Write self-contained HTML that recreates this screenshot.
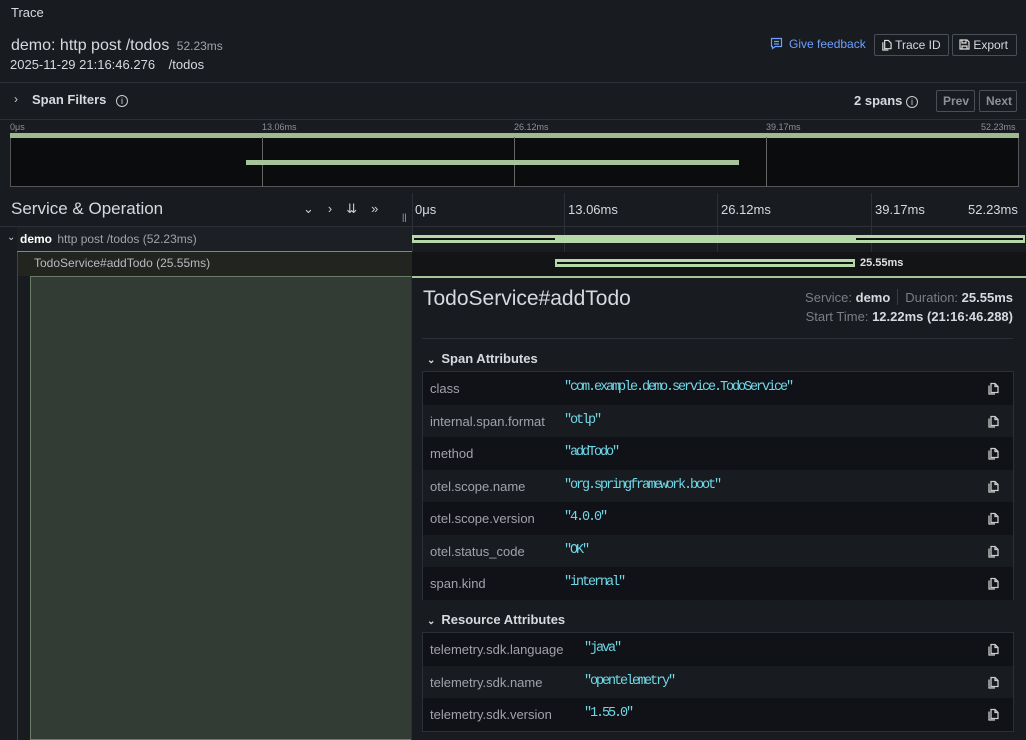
<!DOCTYPE html><html><head><meta charset="utf-8"><style>
*{box-sizing:border-box;margin:0;padding:0}
body{width:1026px;height:740px;overflow:hidden;background:#181b1f;font-family:"Liberation Sans",sans-serif;color:#ccccdc;position:relative;font-size:13px}
.a{position:absolute;white-space:nowrap}
.hl{position:absolute;height:1px;background:#2c3036}
.vl{position:absolute;width:1px}
.btn{position:absolute;border:1px solid #4a4e55;border-radius:2px;height:22px;font-size:12px;color:#d8d9e0;padding:0 6px;line-height:20px}
.row{position:absolute;left:423px;width:590px;height:32.5px}
.k{position:absolute;left:7px;top:9px;color:#a0a3ab;font-size:13px}
.v{position:absolute;top:8px;color:#6fd6e6;font-family:"Liberation Mono",monospace;font-size:13.5px;letter-spacing:-2.1px}
.cp{position:absolute;right:14px;top:10px}
</style></head><body>
<div class="a" style="left:11px;top:5px;font-size:13px;color:#d8d9e0">Trace</div>
<div class="a" style="left:11px;top:37px;font-size:16px;color:#d8d9e0">demo: http post /todos <span style="font-size:12px;color:#a0a3ab;margin-left:3px">52.23ms</span></div>
<div class="a" style="left:10px;top:57px;font-size:13px;color:#d8d9e0">2025-11-29 21:16:46.276 <span style="margin-left:10px">/todos</span></div>
<div class="a" style="left:770px;top:37px;font-size:12px;color:#6e9fff"><svg width="13" height="13" viewBox="0 0 13 13" style="vertical-align:-2px;margin-right:6px"><path d="M1.5 1.5h10v8h-6l-3 2v-2h-1z M4 4.5h5 M4 7h5" fill="none" stroke="#6e9fff" stroke-width="1.2"/></svg>Give feedback</div>
<div class="btn" style="left:874px;top:34px;width:75px"><svg width="11" height="12" viewBox="0 0 12 13" style="vertical-align:-2px"><path d="M4 1.5h4l3 3v6h-7z M2 3.5v8.5h6" fill="none" stroke="#ddd" stroke-width="1.3"/></svg> Trace ID</div>
<div class="btn" style="left:952px;top:34px;width:65px"><svg width="11" height="11" viewBox="0 0 11 11" style="vertical-align:-1px"><path d="M1 1h7l2 2v7h-9z M3 1v3h4v-3 M3 10v-3h5v3" fill="none" stroke="#ddd" stroke-width="1.2"/></svg> Export</div>
<div class="hl" style="left:0;top:82px;width:1026px"></div>
<div class="a" style="left:14px;top:92px;font-size:12px">›</div>
<div class="a" style="left:32px;top:92px;font-size:13px;font-weight:bold;color:#d8d9e0">Span Filters <span style="display:inline-block;width:12px;height:12px;border:1px solid #ccc;border-radius:50%;font-size:9px;text-align:center;line-height:10px;margin-left:6px;font-weight:normal">i</span></div>
<div class="a" style="left:854px;top:93px;font-size:13px;font-weight:bold;color:#d8d9e0">2 spans <span style="display:inline-block;width:12px;height:12px;border:1px solid #ccc;border-radius:50%;font-size:9px;text-align:center;line-height:10px;font-weight:normal">i</span></div>
<div class="btn" style="left:936px;top:90px;width:39px;color:#8e9099;font-weight:bold">Prev</div>
<div class="btn" style="left:979px;top:90px;width:38px;color:#8e9099;font-weight:bold">Next</div>
<div class="hl" style="left:0;top:119px;width:1026px"></div>
<div class="a" style="left:10px;top:122px;font-size:9px;color:#8e9099">0μs</div>
<div class="a" style="left:262px;top:122px;font-size:9px;color:#8e9099">13.06ms</div>
<div class="a" style="left:514px;top:122px;font-size:9px;color:#8e9099">26.12ms</div>
<div class="a" style="left:766px;top:122px;font-size:9px;color:#8e9099">39.17ms</div>
<div class="a" style="left:981px;top:122px;font-size:9px;color:#8e9099">52.23ms</div>
<div class="a" style="left:10px;top:133px;width:1009px;height:54px;background:#0b0c0e;border:1px solid #555"></div>
<div class="a" style="left:10px;top:133px;width:1009px;height:5px;background:#9fb890"></div>
<div class="vl" style="left:262px;top:137px;height:50px;background:#666"></div>
<div class="vl" style="left:514px;top:137px;height:50px;background:#666"></div>
<div class="vl" style="left:766px;top:137px;height:50px;background:#666"></div>
<div class="a" style="left:246px;top:160px;width:493px;height:5px;background:#a6c49a"></div>
<div class="a" style="left:11px;top:199px;font-size:17px;color:#d8d9e0">Service &amp; Operation</div>
<div class="a" style="left:303px;top:201px;font-size:13px;color:#ccc;letter-spacing:14px">⌄›⇊»</div>
<div class="a" style="left:402px;top:212px;font-size:9px;color:#aaa">||</div>
<div class="vl" style="left:412px;top:193px;height:84px;background:#2c3036"></div>
<div class="vl" style="left:564px;top:193px;height:84px;background:#2c3036"></div>
<div class="vl" style="left:717px;top:193px;height:84px;background:#2c3036"></div>
<div class="vl" style="left:871px;top:193px;height:84px;background:#2c3036"></div>
<div class="a" style="left:415px;top:202px;font-size:13px;color:#d8d9e0">0μs</div>
<div class="a" style="left:568px;top:202px;font-size:13px;color:#d8d9e0">13.06ms</div>
<div class="a" style="left:721px;top:202px;font-size:13px;color:#d8d9e0">26.12ms</div>
<div class="a" style="left:875px;top:202px;font-size:13px;color:#d8d9e0">39.17ms</div>
<div class="a" style="left:968px;top:202px;font-size:13px;color:#d8d9e0">52.23ms</div>
<div class="hl" style="left:0;top:226px;width:1026px"></div>
<div class="a" style="left:17px;top:227px;width:395px;height:24px;background:#1c2024"></div>
<div class="a" style="left:7px;top:232px;font-size:10px">⌄</div>
<div class="a" style="left:20px;top:232px;font-size:12px"><b style="color:#fff">demo</b> <span style="color:#a0a3ab;margin-left:2px">http post /todos (52.23ms)</span></div>
<div class="a" style="left:412px;top:235px;width:613px;height:8px;background:#b5d8a8"></div>
<div class="a" style="left:414px;top:238px;width:141px;height:2px;background:#111"></div>
<div class="a" style="left:856px;top:238px;width:167px;height:2px;background:#111"></div>
<div class="a" style="left:17px;top:251px;width:395px;height:1px;background:#7a8c73"></div>
<div class="a" style="left:17px;top:252px;width:395px;height:24px;background:#21241f;border-left:1px solid #444"></div>
<div class="a" style="left:34px;top:256px;font-size:12px;color:#b8bac0">TodoService#addTodo (25.55ms)</div>
<div class="a" style="left:412px;top:252px;width:614px;height:24px;background:#131416"></div>
<div class="a" style="left:555px;top:259px;width:300px;height:8px;background:#b5d8a8"></div>
<div class="a" style="left:557px;top:262px;width:296px;height:2px;background:#111"></div>
<div class="a" style="left:860px;top:257px;font-size:11px;font-weight:bold;color:#e0e0e0">25.55ms</div>
<div class="a" style="left:412px;top:276px;width:614px;height:2px;background:#a6c49a"></div>
<div class="a" style="left:17px;top:276px;width:1px;height:464px;background:#444"></div>
<div class="a" style="left:30px;top:276px;width:382px;height:464px;background:#323c35;border:1px solid #6a7d69;border-right:none"></div>
<div class="a" style="left:411px;top:276px;width:1px;height:464px;background:#2c3036"></div>
<div class="a" style="left:423px;top:287px;font-size:21px;color:#d8d9e0">TodoService#addTodo</div>
<div class="a" style="right:13px;top:289px;font-size:13px;color:#7b7e86">Service: <b style="color:#d8d9e0">demo</b><span style="display:inline-block;width:1px;height:16px;background:#3a3d44;margin:0 7px;vertical-align:-3px"></span>Duration: <b style="color:#d8d9e0">25.55ms</b></div>
<div class="a" style="right:13px;top:309px;font-size:13px;color:#7b7e86">Start Time: <b style="color:#d8d9e0">12.22ms (21:16:46.288)</b></div>
<div class="hl" style="left:422px;top:338px;width:591px"></div>
<div class="a" style="left:427px;top:351px;font-size:13px;font-weight:bold;color:#d8d9e0"><span style="font-size:10px;margin-right:6px">⌄</span>Span Attributes</div>
<div class="a" style="left:422px;top:371px;width:592px;height:229px;border:1px solid #2c3036"></div>
<div class="a" style="left:427px;top:612px;font-size:13px;font-weight:bold;color:#d8d9e0"><span style="font-size:10px;margin-right:6px">⌄</span>Resource Attributes</div>
<div class="a" style="left:422px;top:632px;width:592px;height:100px;border:1px solid #2c3036"></div>
<div class="row" style="top:372px;background:#111217"><span class="k">class</span><span class="v" style="left:141px">"com.example.demo.service.TodoService"</span><svg class="cp" width="12" height="13" viewBox="0 0 12 13"><path d="M4 1.5h4l3 3v6h-7z M8 1.5v3h3 M2 3.5v8.5h6" fill="none" stroke="#ccc" stroke-width="1.3"/></svg></div>
<div class="row" style="top:404.5px;background:#181b1f"><span class="k">internal.span.format</span><span class="v" style="left:141px">"otlp"</span><svg class="cp" width="12" height="13" viewBox="0 0 12 13"><path d="M4 1.5h4l3 3v6h-7z M8 1.5v3h3 M2 3.5v8.5h6" fill="none" stroke="#ccc" stroke-width="1.3"/></svg></div>
<div class="row" style="top:437px;background:#111217"><span class="k">method</span><span class="v" style="left:141px">"addTodo"</span><svg class="cp" width="12" height="13" viewBox="0 0 12 13"><path d="M4 1.5h4l3 3v6h-7z M8 1.5v3h3 M2 3.5v8.5h6" fill="none" stroke="#ccc" stroke-width="1.3"/></svg></div>
<div class="row" style="top:469.5px;background:#181b1f"><span class="k">otel.scope.name</span><span class="v" style="left:141px">"org.springframework.boot"</span><svg class="cp" width="12" height="13" viewBox="0 0 12 13"><path d="M4 1.5h4l3 3v6h-7z M8 1.5v3h3 M2 3.5v8.5h6" fill="none" stroke="#ccc" stroke-width="1.3"/></svg></div>
<div class="row" style="top:502px;background:#111217"><span class="k">otel.scope.version</span><span class="v" style="left:141px">"4.0.0"</span><svg class="cp" width="12" height="13" viewBox="0 0 12 13"><path d="M4 1.5h4l3 3v6h-7z M8 1.5v3h3 M2 3.5v8.5h6" fill="none" stroke="#ccc" stroke-width="1.3"/></svg></div>
<div class="row" style="top:534.5px;background:#181b1f"><span class="k">otel.status_code</span><span class="v" style="left:141px">"OK"</span><svg class="cp" width="12" height="13" viewBox="0 0 12 13"><path d="M4 1.5h4l3 3v6h-7z M8 1.5v3h3 M2 3.5v8.5h6" fill="none" stroke="#ccc" stroke-width="1.3"/></svg></div>
<div class="row" style="top:567px;background:#111217"><span class="k">span.kind</span><span class="v" style="left:141px">"internal"</span><svg class="cp" width="12" height="13" viewBox="0 0 12 13"><path d="M4 1.5h4l3 3v6h-7z M8 1.5v3h3 M2 3.5v8.5h6" fill="none" stroke="#ccc" stroke-width="1.3"/></svg></div>
<div class="row" style="top:633px;background:#111217"><span class="k">telemetry.sdk.language</span><span class="v" style="left:161px">"java"</span><svg class="cp" width="12" height="13" viewBox="0 0 12 13"><path d="M4 1.5h4l3 3v6h-7z M8 1.5v3h3 M2 3.5v8.5h6" fill="none" stroke="#ccc" stroke-width="1.3"/></svg></div>
<div class="row" style="top:665.5px;background:#181b1f"><span class="k">telemetry.sdk.name</span><span class="v" style="left:161px">"opentelemetry"</span><svg class="cp" width="12" height="13" viewBox="0 0 12 13"><path d="M4 1.5h4l3 3v6h-7z M8 1.5v3h3 M2 3.5v8.5h6" fill="none" stroke="#ccc" stroke-width="1.3"/></svg></div>
<div class="row" style="top:698px;background:#111217"><span class="k">telemetry.sdk.version</span><span class="v" style="left:161px">"1.55.0"</span><svg class="cp" width="12" height="13" viewBox="0 0 12 13"><path d="M4 1.5h4l3 3v6h-7z M8 1.5v3h3 M2 3.5v8.5h6" fill="none" stroke="#ccc" stroke-width="1.3"/></svg></div>
</body></html>
